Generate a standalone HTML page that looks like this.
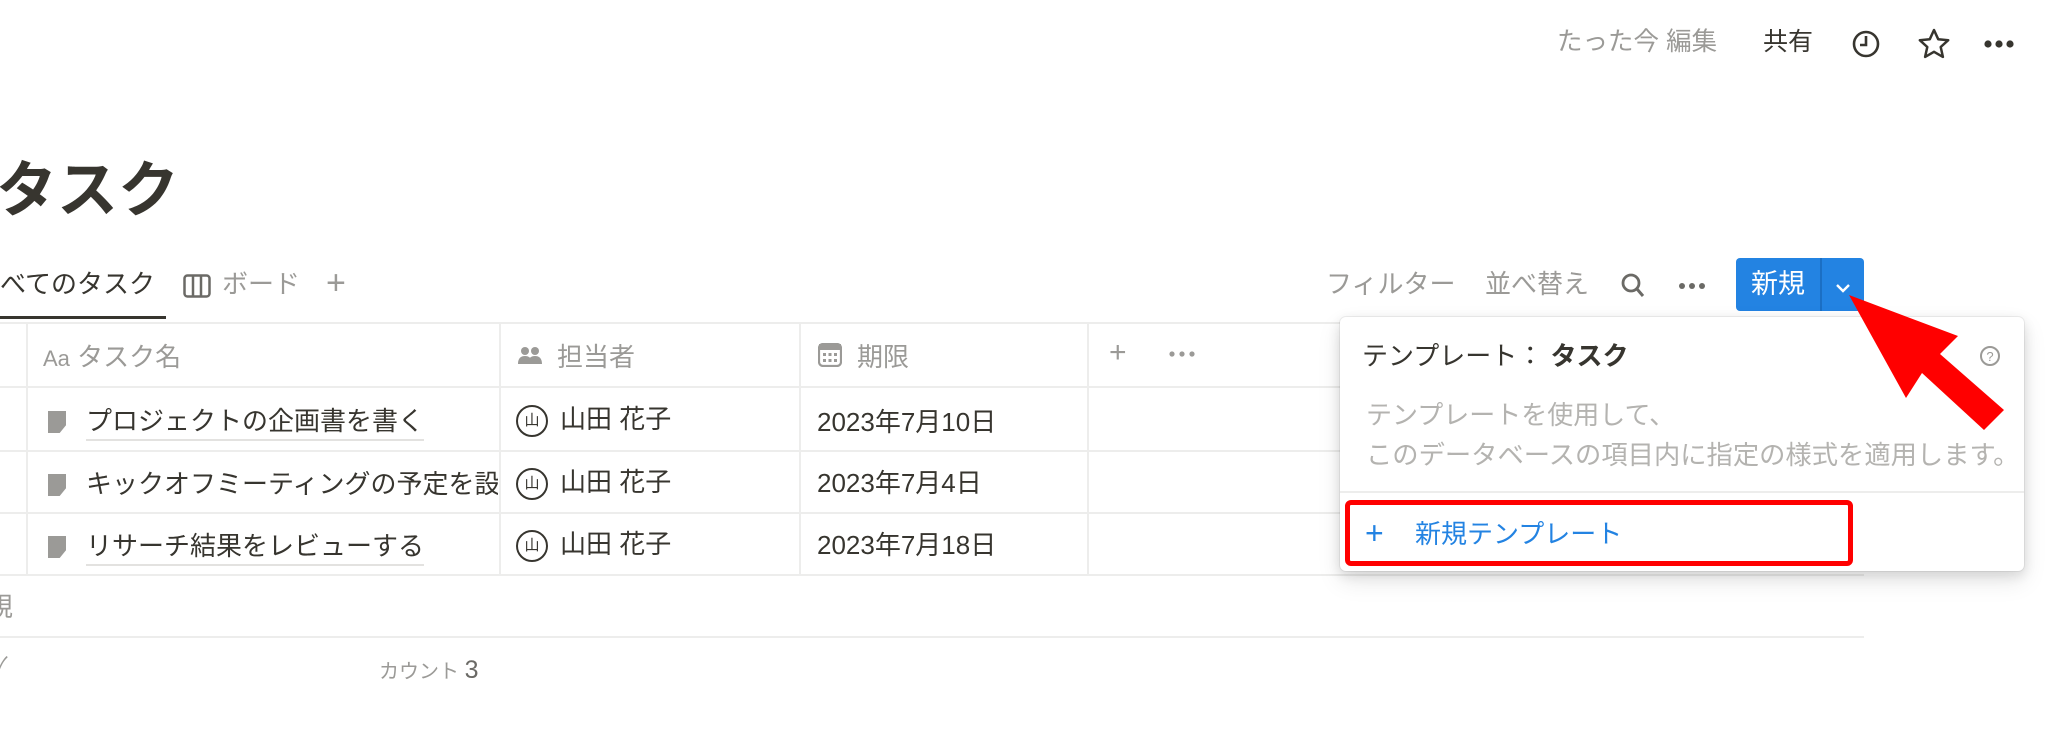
<!DOCTYPE html>
<html><head><meta charset="utf-8"><style>
*{margin:0;padding:0;box-sizing:border-box}
body{width:2048px;height:730px;background:#fff;position:relative;overflow:hidden;font-family:"Liberation Sans","Noto Sans CJK JP",sans-serif;color:#37352f}
.a{position:absolute;white-space:nowrap;line-height:1}
.g{color:#9b9a97}
.h{position:absolute;height:2px;background:#ededec}
.v{position:absolute;width:2px;background:#ededec}
.t{font-size:26px}
.u{border-bottom:2px solid #e3e2e0;padding-bottom:3px}
.doc{display:inline-block;width:18px;height:22px;background:#9b9a97;vertical-align:-3px;margin-right:20px;clip-path:polygon(0 0,100% 0,100% 65%,65% 100%,0 100%)}
.av{display:inline-block;width:32px;height:32px;border:2px solid #37352f;border-radius:50%;font-size:15px;text-align:center;line-height:28px;vertical-align:middle;margin-right:12px}
</style></head><body>
<!-- top bar -->
<div class="a g" style="left:1557px;top:30px;font-size:25.5px">たった今 編集</div>
<div class="a" style="left:1763px;top:30px;font-size:25px">共有</div>
<svg class="a" style="left:1851px;top:28px" width="30" height="32" viewBox="0 0 30 32"><circle cx="15" cy="16" r="12" fill="none" stroke="#37352f" stroke-width="2.6"/><path d="M15 8v9h-6" fill="none" stroke="#37352f" stroke-width="2.6"/></svg>
<svg class="a" style="left:1917px;top:27px" width="34" height="34" viewBox="0 0 34 34"><path d="M17 3l4.2 9.2 10 1-7.5 6.8 2.2 9.9L17 24.8 8.1 29.9l2.2-9.9L2.8 13.2l10-1z" fill="none" stroke="#37352f" stroke-width="2.5" stroke-linejoin="round"/></svg>
<svg class="a" style="left:1983px;top:39px" width="32" height="10"><circle cx="5" cy="5" r="3.6" fill="#37352f"/><circle cx="16" cy="5" r="3.6" fill="#37352f"/><circle cx="27" cy="5" r="3.6" fill="#37352f"/></svg>
<!-- title -->
<div class="a" style="left:-4px;top:160px;font-size:61px;font-weight:bold">タスク</div>
<!-- tabs -->
<div class="a" style="left:0;top:271px;font-size:26px">べてのタスク</div>
<svg class="a" style="left:183px;top:274px" width="28" height="24"><rect x="1.5" y="1.5" width="25" height="21" rx="3" fill="none" stroke="#6b6a66" stroke-width="2.5"/><path d="M10 2v20M18 2v20" stroke="#6b6a66" stroke-width="2.5"/></svg>
<div class="a g" style="left:222px;top:271px;font-size:26px">ボード</div>
<div class="a g" style="left:326px;top:266px;font-size:34px;font-weight:300">+</div>
<div class="a" style="left:0;top:316px;width:166px;height:3px;background:#37352f"></div>
<div class="a g" style="left:1326px;top:271px;font-size:26px">フィルター</div>
<div class="a g" style="left:1485px;top:271px;font-size:26px">並べ替え</div>
<svg class="a" style="left:1620px;top:272px" width="26" height="28"><circle cx="11" cy="11" r="8" fill="none" stroke="#6b6a66" stroke-width="2.8"/><path d="M17 17l6 7" stroke="#6b6a66" stroke-width="3"/></svg>
<svg class="a" style="left:1678px;top:281px" width="28" height="10"><circle cx="4" cy="5" r="3" fill="#6b6a66"/><circle cx="14" cy="5" r="3" fill="#6b6a66"/><circle cx="24" cy="5" r="3" fill="#6b6a66"/></svg>
<div class="a" style="left:1736px;top:258px;width:128px;height:53px;background:#2383e2;border-radius:4px"></div>
<div class="a" style="left:1820px;top:258px;width:2px;height:53px;background:#1b6fc4"></div>
<div class="a" style="left:1751px;top:271px;font-size:27px;color:#fff">新規</div>
<svg class="a" style="left:1835px;top:283px" width="16" height="10"><path d="M2 2l6 6 6-6" fill="none" stroke="#fff" stroke-width="2.4"/></svg>
<!-- table -->
<div class="h" style="left:0;top:322px;width:1864px"></div>
<div class="h" style="left:0;top:386px;width:1340px"></div>
<div class="h" style="left:0;top:450px;width:1340px"></div>
<div class="h" style="left:0;top:512px;width:1340px"></div>
<div class="h" style="left:0;top:574px;width:1864px"></div>
<div class="h" style="left:0;top:636px;width:1864px"></div>
<div class="v" style="left:26px;top:323px;height:252px"></div>
<div class="v" style="left:499px;top:323px;height:252px"></div>
<div class="v" style="left:799px;top:323px;height:252px"></div>
<div class="v" style="left:1087px;top:323px;height:252px"></div>
<div class="a g t" style="left:43px;top:344px"><span style="font-size:22px">Aa</span> タスク名</div>
<svg class="a" style="left:518px;top:346px" width="24" height="18"><circle cx="7" cy="5" r="4" fill="#9b9a97"/><circle cx="17" cy="5" r="4" fill="#9b9a97"/><path d="M0 18c0-6 3-8 7-8s7 2 7 8zM10 18c0-6 3-8 7-8s7 2 7 8z" fill="#9b9a97"/></svg>
<div class="a g t" style="left:557px;top:344px">担当者</div>
<svg class="a" style="left:818px;top:343px" width="24" height="24"><rect x="1" y="1" width="22" height="22" rx="4" fill="none" stroke="#9b9a97" stroke-width="2.2"/><rect x="1" y="1" width="22" height="6" fill="#9b9a97"/><g fill="#9b9a97"><rect x="5" y="10" width="3" height="3"/><rect x="10.5" y="10" width="3" height="3"/><rect x="16" y="10" width="3" height="3"/><rect x="5" y="16" width="3" height="3"/><rect x="10.5" y="16" width="3" height="3"/><rect x="16" y="16" width="3" height="3"/></g></svg>
<div class="a g t" style="left:857px;top:344px">期限</div>
<div class="a g" style="left:1109px;top:338px;font-size:30px;font-weight:300">+</div>
<svg class="a" style="left:1169px;top:350px" width="26" height="8"><circle cx="3" cy="4" r="2.6" fill="#9b9a97"/><circle cx="13" cy="4" r="2.6" fill="#9b9a97"/><circle cx="23" cy="4" r="2.6" fill="#9b9a97"/></svg>

<div class="a t" style="left:48px;top:408px"><span class="doc"></span><span class="u">プロジェクトの企画書を書く</span></div>
<div class="a t" style="left:48px;top:471px;width:450px;overflow:hidden"><span class="doc"></span><span class="u">キックオフミーティングの予定を設定</span></div>
<div class="a t" style="left:48px;top:533px"><span class="doc"></span><span class="u">リサーチ結果をレビューする</span></div>
<div class="a t" style="left:516px;top:405px"><span class="av">山</span>山田 花子</div>
<div class="a t" style="left:516px;top:468px"><span class="av">山</span>山田 花子</div>
<div class="a t" style="left:516px;top:530px"><span class="av">山</span>山田 花子</div>
<div class="a t" style="left:817px;top:409px">2023年7月10日</div>
<div class="a t" style="left:817px;top:470px">2023年7月4日</div>
<div class="a t" style="left:817px;top:532px">2023年7月18日</div>
<div class="a g t" style="left:-13px;top:594px">規</div>
<div class="a g" style="left:-6px;top:655px;font-size:20px">✓</div>
<div class="a g" style="left:379px;top:658px;font-size:20px">カウント <span style="font-size:25px;color:#6b6a66">3</span></div>
<!-- popup -->
<div class="a" style="left:1340px;top:317px;width:684px;height:254px;background:#fff;border-radius:6px;box-shadow:0 0 0 1px rgba(15,15,15,.06),0 4px 12px rgba(15,15,15,.12),0 10px 24px rgba(15,15,15,.1)"></div>
<div class="a" style="left:1362px;top:343px;font-size:26px">テンプレート： <b>タスク</b></div>
<svg class="a" style="left:1979px;top:345px" width="22" height="22"><circle cx="11" cy="11" r="9" fill="none" stroke="#9b9a97" stroke-width="2"/><text x="11" y="16" font-size="13" text-anchor="middle" fill="#9b9a97" font-family="Liberation Sans">?</text></svg>
<div class="a g" style="left:1366px;top:402px;font-size:26px;color:#b4b3b0">テンプレートを使用して、</div>
<div class="a g" style="left:1366px;top:442px;font-size:26.3px;color:#b4b3b0">このデータベースの項目内に指定の様式を適用します。</div>
<div class="h" style="left:1340px;top:491px;width:684px"></div>
<div class="a" style="left:1345px;top:500px;width:508px;height:66px;border:5px solid #f00;border-radius:6px"></div>
<div class="a" style="left:1365px;top:517px;font-size:32px;color:#2383e2;font-weight:300">+</div>
<div class="a" style="left:1415px;top:521px;font-size:26px;color:#2383e2">新規テンプレート</div>
<!-- arrow -->
<svg class="a" style="left:0;top:0" width="2048" height="730"><polygon points="1849,295 1958,336 1940,354 2004,410 1984,430 1922,373 1906,398" fill="#f00"/></svg>
</body></html>
